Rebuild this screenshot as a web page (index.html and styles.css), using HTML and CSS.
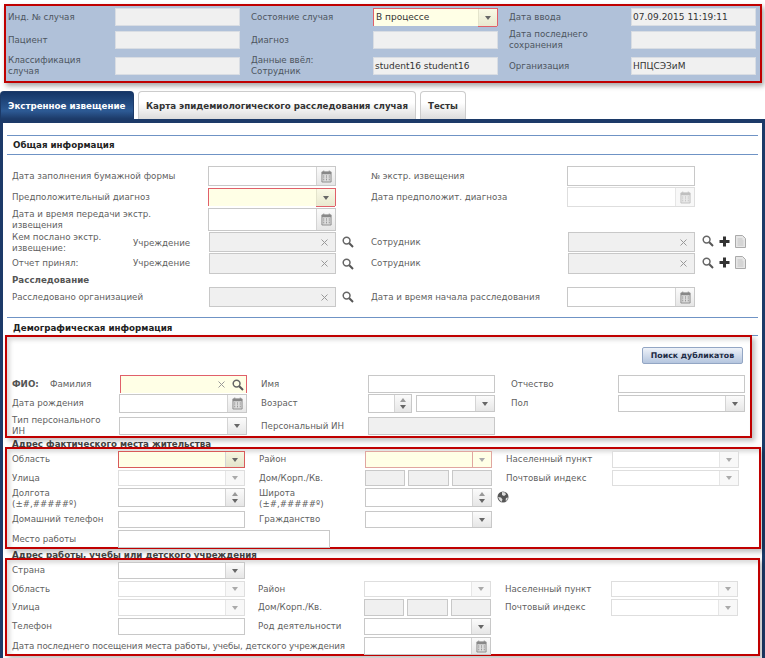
FILE: index.html
```html
<!DOCTYPE html>
<html lang="ru">
<head>
    <meta charset="UTF-8">
    <title>Экстренное извещение</title>
    <link rel="stylesheet" href="styles.css">
</head>
<body>
    <svg class="sprite" width="0" height="0">
        <symbol id="i-cal" viewBox="0 0 12 14">
            <path d="M1 2h10v11H1z" fill="#dcdcdc" stroke="#888"/>
            <path d="M1 2h10v2.500H1z" fill="#888"/>
            <path d="M3 0.500v2M9 0.500v2" stroke="#888"/>
            <path d="M2.500 6h1v1h-1zM5.500 6h1v1h-1zM8.500 6h1v1h-1zM2.500 8h1v1h-1zM5.500 8h1v1h-1zM8.500 8h1v1h-1zM2.500 10h1v1h-1zM5.500 10h1v1h-1zM8.500 10h1v1h-1z" fill="#777"/>
        </symbol>
        <symbol id="i-search" viewBox="0 0 12 12">
            <circle cx="4.600" cy="4.600" r="3.400" fill="none" stroke="#666" stroke-width="1.500"/>
            <path d="M7.300 7.300L11 11" stroke="#555" stroke-width="2"/>
        </symbol>
        <symbol id="i-x" viewBox="0 0 7 7">
            <path d="M0.500 0.500l6 6M6.500 0.500l-6 6" stroke="#999" fill="none"/>
        </symbol>
        <symbol id="i-plus" viewBox="0 0 11 11">
            <path d="M4 0.500h3V4h3.500v3H7v3.500H4V7H0.500V4H4z" fill="#333"/>
        </symbol>
        <symbol id="i-doc" viewBox="0 0 11 13">
            <path d="M0.500 0.500h7l3 3v9h-10z" fill="#e6e6e6" stroke="#aaa"/>
            <path d="M2.500 4h5M2.500 6h6M2.500 8h6M2.500 10h6" stroke="#c4c4c4"/>
        </symbol>
        <symbol id="i-globe" viewBox="0 0 12 12">
            <circle cx="6" cy="6" r="5.500" fill="#555"/>
            <path d="M5 1l3 0.500 1 2-2 1.500-2-1zM1 6l3 0.500 1.500 2-1 2.500-2-2zM9 7l2-0.500-1 3-1.500 0z" fill="#ddd"/>
        </symbol>
    </svg>

    <div class="case-head">
        <label class="lbl">Инд. № случая</label>
        <div class="head-val"></div>
        <label class="lbl">Состояние случая</label>
        <div class="fld req head-sel"><span class="fld-text">В процессе</span><span class="sel-btn"><i class="tri"></i></span></div>
        <label class="lbl">Дата ввода</label>
        <div class="head-val">07.09.2015 11:19:11</div>

        <label class="lbl">Пациент</label>
        <div class="head-val"></div>
        <label class="lbl">Диагноз</label>
        <div class="head-val"></div>
        <label class="lbl">Дата последнего<br>сохранения</label>
        <div class="head-val"></div>

        <label class="lbl">Классификация<br>случая</label>
        <div class="head-val"></div>
        <label class="lbl">Данные ввёл:<br>Сотрудник</label>
        <div class="head-val">student16 student16</div>
        <label class="lbl">Организация</label>
        <div class="head-val">НПЦСЭЗиМ</div>
    </div>

    <div class="tabs">
        <div class="tab active">Экстренное извещение</div>
        <div class="tab">Карта эпидемиологического расследования случая</div>
        <div class="tab">Тесты</div>
    </div>

    <div class="tab-body">
        <h3 class="sect-title">Общая информация</h3>

        <div class="grid-general">
            <label class="lbl">Дата заполнения бумажной формы</label>
            <div class="fld"><span class="fld-text"></span><span class="sel-btn"><svg class="ic-cal"><use href="#i-cal"/></svg></span></div>
            <i></i>
            <label class="lbl">№ экстр. извещения</label>
            <div class="fld"></div>
            <i></i>

            <label class="lbl">Предположительный диагноз</label>
            <div class="fld req sel-low"><span class="fld-text"></span><span class="sel-btn"><i class="tri"></i></span></div>
            <i></i>
            <label class="lbl">Дата предположит. диагноза</label>
            <div class="fld pale"><span class="fld-text"></span><span class="sel-btn"><svg class="ic-cal faded"><use href="#i-cal"/></svg></span></div>
            <i></i>

            <label class="lbl">Дата и время передачи экстр.<br>извещения</label>
            <div class="fld"><span class="fld-text"></span><span class="sel-btn"><svg class="ic-cal"><use href="#i-cal"/></svg></span></div>
            <i class="row-end"></i>

            <div class="lbl-pair"><label class="lbl">Кем послано экстр.<br>извещение:</label><label class="lbl">Учреждение</label></div>
            <div class="fld gray shift"><span class="fld-text"></span><svg class="ic-x"><use href="#i-x"/></svg></div>
            <svg class="ic-search beside"><use href="#i-search"/></svg>
            <label class="lbl">Сотрудник</label>
            <div class="fld gray shift"><span class="fld-text"></span><svg class="ic-x"><use href="#i-x"/></svg></div>
            <div class="icons">
                <svg class="ic-search"><use href="#i-search"/></svg>
                <svg class="ic-plus"><use href="#i-plus"/></svg>
                <svg class="ic-doc"><use href="#i-doc"/></svg>
            </div>

            <div class="lbl-pair"><label class="lbl">Отчет принял:</label><label class="lbl">Учреждение</label></div>
            <div class="fld gray shift"><span class="fld-text"></span><svg class="ic-x"><use href="#i-x"/></svg></div>
            <svg class="ic-search beside"><use href="#i-search"/></svg>
            <label class="lbl">Сотрудник</label>
            <div class="fld gray shift"><span class="fld-text"></span><svg class="ic-x"><use href="#i-x"/></svg></div>
            <div class="icons">
                <svg class="ic-search"><use href="#i-search"/></svg>
                <svg class="ic-plus"><use href="#i-plus"/></svg>
                <svg class="ic-doc"><use href="#i-doc"/></svg>
            </div>

            <label class="lbl bold wide">Расследование</label>

            <label class="lbl">Расследовано организацией</label>
            <div class="fld gray shift"><span class="fld-text"></span><svg class="ic-x"><use href="#i-x"/></svg></div>
            <svg class="ic-search beside"><use href="#i-search"/></svg>
            <label class="lbl">Дата и время начала расследования</label>
            <div class="fld"><span class="fld-text"></span><span class="sel-btn"><svg class="ic-cal"><use href="#i-cal"/></svg></span></div>
        </div>

        <div class="rule"></div>
        <h3 class="sect-title demo">Демографическая информация</h3>

        <div class="red-box box-fio">
            <div class="dup-bar"><button class="dup-btn">Поиск дубликатов</button></div>
            <div class="grid-fio">
                <div class="lbl-pair fio"><label class="lbl bold">ФИО:</label><label class="lbl">Фамилия</label></div>
                <div class="fld req shift"><span class="fld-text"></span><svg class="ic-x"><use href="#i-x"/></svg><svg class="ic-search inner"><use href="#i-search"/></svg></div>
                <label class="lbl">Имя</label>
                <div class="fld"></div>
                <label class="lbl">Отчество</label>
                <div class="fld"></div>

                <label class="lbl">Дата рождения</label>
                <div class="fld"><span class="fld-text"></span><span class="sel-btn"><svg class="ic-cal"><use href="#i-cal"/></svg></span></div>
                <label class="lbl">Возраст</label>
                <div class="age">
                    <div class="fld spin-fld"><span class="fld-text"></span><span class="sel-btn spin"><i class="tri up"></i><i class="tri"></i></span></div>
                    <div class="fld sel-low"><span class="fld-text"></span><span class="sel-btn"><i class="tri"></i></span></div>
                </div>
                <label class="lbl">Пол</label>
                <div class="fld sel-low"><span class="fld-text"></span><span class="sel-btn"><i class="tri"></i></span></div>

                <label class="lbl low">Тип персонального<br>ИН</label>
                <div class="fld low"><span class="fld-text"></span><span class="sel-btn"><i class="tri"></i></span></div>
                <label class="lbl low">Персональный ИН</label>
                <div class="fld gray low"></div>
            </div>
        </div>

        <h3 class="sect-title addr">Адрес фактического места жительства</h3>

        <div class="red-box box-live">
            <div class="grid-addr">
                <label class="lbl">Область</label>
                <div class="fld req-full"><span class="fld-text"></span><span class="sel-btn"><i class="tri"></i></span></div>
                <label class="lbl mid">Район</label>
                <div class="fld req-soft"><span class="fld-text"></span><span class="sel-btn"><i class="tri faded"></i></span></div>
                <label class="lbl mid">Населенный пункт</label>
                <div class="fld pale"><span class="fld-text"></span><span class="sel-btn"><i class="tri faded"></i></span></div>

                <label class="lbl">Улица</label>
                <div class="fld pale"><span class="fld-text"></span><span class="sel-btn"><i class="tri faded"></i></span></div>
                <label class="lbl mid">Дом/Корп./Кв.</label>
                <div class="house"><div class="fld gray"></div><div class="fld gray"></div><div class="fld gray"></div></div>
                <label class="lbl mid">Почтовый индекс</label>
                <div class="fld pale"><span class="fld-text"></span><span class="sel-btn"><i class="tri faded"></i></span></div>

                <label class="lbl">Долгота<br>(±#,#####º)</label>
                <div class="fld spin-row"><span class="fld-text"></span><span class="sel-btn spin"><i class="tri up"></i><i class="tri"></i></span></div>
                <label class="lbl mid">Широта<br>(±#,#####º)</label>
                <div class="fld spin-row"><span class="fld-text"></span><span class="sel-btn spin"><i class="tri up"></i><i class="tri"></i></span></div>
                <svg class="ic-globe"><use href="#i-globe"/></svg>

                <label class="lbl">Домашний телефон</label>
                <div class="fld"></div>
                <label class="lbl mid">Гражданство</label>
                <div class="fld"><span class="fld-text"></span><span class="sel-btn"><i class="tri"></i></span></div>
                <i class="wide-end"></i>

                <label class="lbl">Место работы</label>
                <div class="fld work-fld"></div>
            </div>
        </div>

        <h3 class="sect-title addr">Адрес работы, учебы или детского учреждения</h3>

        <div class="red-box box-work">
            <div class="grid-addr">
                <label class="lbl">Страна</label>
                <div class="fld"><span class="fld-text"></span><span class="sel-btn"><i class="tri"></i></span></div>
                <i class="row-end"></i>

                <label class="lbl">Область</label>
                <div class="fld pale"><span class="fld-text"></span><span class="sel-btn"><i class="tri faded"></i></span></div>
                <label class="lbl mid tight">Район</label>
                <div class="fld pale"><span class="fld-text"></span><span class="sel-btn"><i class="tri faded"></i></span></div>
                <label class="lbl mid">Населенный пункт</label>
                <div class="fld pale"><span class="fld-text"></span><span class="sel-btn"><i class="tri faded"></i></span></div>

                <label class="lbl">Улица</label>
                <div class="fld pale"><span class="fld-text"></span><span class="sel-btn"><i class="tri faded"></i></span></div>
                <label class="lbl mid tight">Дом/Корп./Кв.</label>
                <div class="house"><div class="fld gray"></div><div class="fld gray"></div><div class="fld gray"></div></div>
                <label class="lbl mid">Почтовый индекс</label>
                <div class="fld pale"><span class="fld-text"></span><span class="sel-btn"><i class="tri faded"></i></span></div>

                <label class="lbl">Телефон</label>
                <div class="fld"></div>
                <label class="lbl mid tight">Род деятельности</label>
                <div class="fld"><span class="fld-text"></span><span class="sel-btn"><i class="tri"></i></span></div>
                <i class="wide-end"></i>

                <label class="lbl last-lbl">Дата последнего посещения места работы, учебы, детского учреждения</label>
                <div class="fld"><span class="fld-text"></span><span class="sel-btn"><svg class="ic-cal"><use href="#i-cal"/></svg></span></div>
            </div>
        </div>
    </div>
</body>
</html>
```

FILE: styles.css
```css
html, body {
    height: 100%;
    overflow: hidden;
}
body {
    margin: 0;
    background: #fff;
    font-family: "DejaVu Sans", Verdana, sans-serif;
    font-size: 8.7px;
    line-height: 11px;
    color: #555;
}
.sprite {
    position: absolute;
}
.lbl {
    align-self: center;
    color: #5f5f5f;
    white-space: nowrap;
}
.bold {
    font-weight: bold;
    color: #555;
}

/* case header */
.case-head {
    display: grid;
    grid-template-columns: 107px 125px 133px 125px 133px 125px;
    grid-template-rows: 18px 18px 21px;
    row-gap: 5px;
    box-sizing: border-box;
    margin: 4px 3px 0 4px;
    height: 79px;
    padding: 2px 0 0 2px;
    background: #b0c1d9;
    border: 2px solid #c00000;
    box-shadow: 2px 3px 5px rgba(0, 0, 0, 0.35);
}
.case-head .lbl {
    color: #4d5560;
}
.case-head .lbl:nth-child(6n+3), .case-head .lbl:nth-child(6n+5) {
    padding-left: 11px;
}
.case-head > :nth-child(n+13) {
    margin-top: 3px;
}
.head-val {
    box-sizing: border-box;
    border: 1px solid #d9dde3;
    background: #f0f0f0;
    color: #333;
    padding: 0 1px;
    font-size: 9px;
    line-height: 17px;
    white-space: nowrap;
    overflow: hidden;
}

/* tabs */
.tabs {
    display: flex;
    gap: 4px;
    height: 28px;
    margin-top: 8px;
}
.tab {
    box-sizing: border-box;
    padding: 0 7px;
    border: 1px solid #ccc;
    border-bottom: none;
    border-radius: 4px 4px 0 0;
    background: linear-gradient(#fff 40%, #dcdcdc);
    color: #333;
    font-weight: bold;
    line-height: 29px;
    white-space: nowrap;
}
.tab.active {
    width: 134px;
    border-color: #1c3a68;
    background: linear-gradient(#143566, #2d5a94 70%, #1c3a68);
    color: #fff;
}

/* main panel */
.tab-body {
    box-sizing: border-box;
    height: 540px;
    padding: 12px 4px 0 4px;
    border: solid #1c3a68;
    border-width: 4px 3px 0 3px;
}
.sect-title {
    box-sizing: border-box;
    height: 20px;
    margin: 0;
    padding-left: 6px;
    border-top: 1px solid #6f93c5;
    border-bottom: 1px solid #6f93c5;
    font-size: 8.7px;
    line-height: 18px;
    color: #222;
}
.rule {
    height: 1px;
    margin-top: 10px;
    background: #6f93c5;
}
.sect-title.demo {
    height: 18px;
    border-top: none;
    line-height: 20px;
}
.sect-title.addr {
    height: 9px;
    border: none;
    line-height: 13px;
    margin-left: -1px;
    color: #444;
    overflow: hidden;
}

/* form fields */
.fld {
    display: flex;
    align-items: center;
    box-sizing: border-box;
    border: 1px solid #c8c8c8;
    background: #fff;
    min-width: 0;
}
.fld-text {
    flex: 1;
    align-self: stretch;
    padding-left: 2px;
    color: #333;
    font-size: 9px;
    line-height: 16px;
}
.fld.gray {
    background: #f0f0f0;
}
.fld.pale {
    border-color: #dedede;
}
.fld.req {
    border-color: #e0606a;
    border-bottom: none;
    background: #ffffe6;
}
.fld.req-full {
    border-color: #d85a5a;
    background: #ffffe6;
}
.fld.req-soft {
    border-color: #e0a6a0;
    background: #ffffe6;
}
.fld.shift {
    margin-left: 1px;
}
.sel-btn {
    display: flex;
    flex-direction: column;
    align-items: center;
    justify-content: center;
    align-self: stretch;
    width: 18px;
    border-left: 1px solid #d4d4d4;
    background: linear-gradient(#fbfbfb, #e6e6e6);
}
.req .sel-btn {
    border-left-color: #e4e4cc;
    box-shadow: 0 1px 0 #e0606a;
    background: linear-gradient(#fafae6, #e9e9d0);
}
.req-full .sel-btn {
    background: linear-gradient(#f6f6e0, #e4e4cc);
}
.req-soft .sel-btn {
    border-left-color: #e0a6a0;
    background: #ffffe6;
}
.pale .sel-btn {
    border-left-color: #e6e6e6;
    background: #f8f8f8;
}
.tri {
    width: 0;
    height: 0;
    border: 3px solid transparent;
    border-top: 4px solid #666;
    border-bottom: none;
}
.tri.faded {
    border-top-color: #aaa;
}
.tri.up {
    border-top: none;
    border-bottom: 4px solid #999;
    margin-bottom: 3px;
}
.ic-cal {
    width: 11px;
    height: 13px;
}
.ic-cal.faded {
    opacity: 0.5;
}
.ic-x {
    width: 7px;
    height: 7px;
    margin-right: 7px;
}
.ic-search {
    width: 12px;
    height: 12px;
}
.ic-search.beside {
    align-self: center;
    margin-left: 6px;
}
.ic-search.inner {
    margin-right: 2px;
    margin-left: 0;
}
.ic-plus {
    width: 11px;
    height: 11px;
}
.ic-doc {
    width: 11px;
    height: 13px;
}
.ic-globe {
    grid-column: 5 / -1;
    width: 12px;
    height: 12px;
    margin: 3px 0 0 5px;
}
.icons {
    display: flex;
    align-items: center;
    gap: 5px;
    padding: 0 0 2px 7px;
}
.lbl-pair {
    display: grid;
    grid-template-columns: 121px 1fr;
    align-items: center;
}
.lbl-pair.fio {
    grid-template-columns: 38px 1fr;
}
.row-end {
    grid-column: 3 / -1;
}

/* general section */
.grid-general {
    display: grid;
    grid-template-columns: 196px 128px 35px 196px 128px 1fr;
    grid-template-rows: 20px 20px 23px 20px 21px 11px 20px;
    row-gap: 1px;
    margin-top: 11px;
    padding-left: 5px;
}
.grid-general .wide {
    grid-column: 1 / -1;
}

/* red outlined blocks */
.red-box {
    position: relative;
    box-sizing: border-box;
    margin-left: -2px;
    border: 2px solid #c00000;
    background: #fff;
    box-shadow: inset 3px 3px 4px rgba(0, 0, 0, 0.15), 3px 3px 5px rgba(0, 0, 0, 0.25);
}
.box-fio {
    width: 747px;
    height: 103px;
    margin-top: -1px;
}
.box-live {
    width: 756px;
    height: 102px;
}
.box-work {
    width: 755px;
    height: 98px;
}
.dup-bar {
    display: flex;
    justify-content: flex-end;
    box-sizing: border-box;
    height: 27px;
    padding: 10px 7px 0 0;
}
.dup-btn {
    width: 101px;
    height: 17px;
    padding: 0;
    border: 1px solid #93a6c4;
    border-radius: 2px;
    background: linear-gradient(#eef2f9, #b4c5de);
    font: bold 7.8px "DejaVu Sans", Verdana, sans-serif;
    color: #1c2a44;
    white-space: nowrap;
}
.grid-fio {
    display: grid;
    grid-template-columns: 107px 128px 121px 127px 123px 127px;
    grid-template-rows: 18px 19px 21px;
    row-gap: 1px;
    margin-top: 11px;
    padding-left: 5px;
}
.grid-fio > .lbl:nth-child(6n+3) {
    padding-left: 14px;
}
.grid-fio > .lbl:nth-child(6n+5) {
    padding-left: 16px;
}
.grid-fio .low {
    margin-top: 3px;
}
.age {
    display: grid;
    grid-template-columns: 44px 79px;
    column-gap: 4px;
}
.spin-fld .sel-btn {
    width: 16px;
}
.sel-low {
    margin: 1px 0;
}
.house {
    display: grid;
    grid-template-columns: 40px 41px 40px;
    column-gap: 3px;
}
.grid-addr {
    display: grid;
    grid-template-columns: 106px 127px 120px 127px 120px 127px;
    padding: 2px 0 0 5px;
    row-gap: 2px;
}
.box-live .grid-addr {
    grid-template-rows: 17px 16px 21px 17px 18px;
}
.box-work .grid-addr {
    grid-template-columns: 106px 127px 119px 127px 120px 127px;
    grid-template-rows: 17px 16px 17px 17px 18px;
}
.lbl.mid {
    padding-left: 14px;
}
.lbl.tight {
    padding-left: 13px;
}
.last-lbl {
    grid-column: 1 / 4;
    letter-spacing: -0.09px;
}
.spin-row {
    margin-bottom: 2px;
}
.wide-end {
    grid-column: 5 / -1;
}
.work-fld {
    grid-column: 2 / 4;
    width: 212px;
}
```
